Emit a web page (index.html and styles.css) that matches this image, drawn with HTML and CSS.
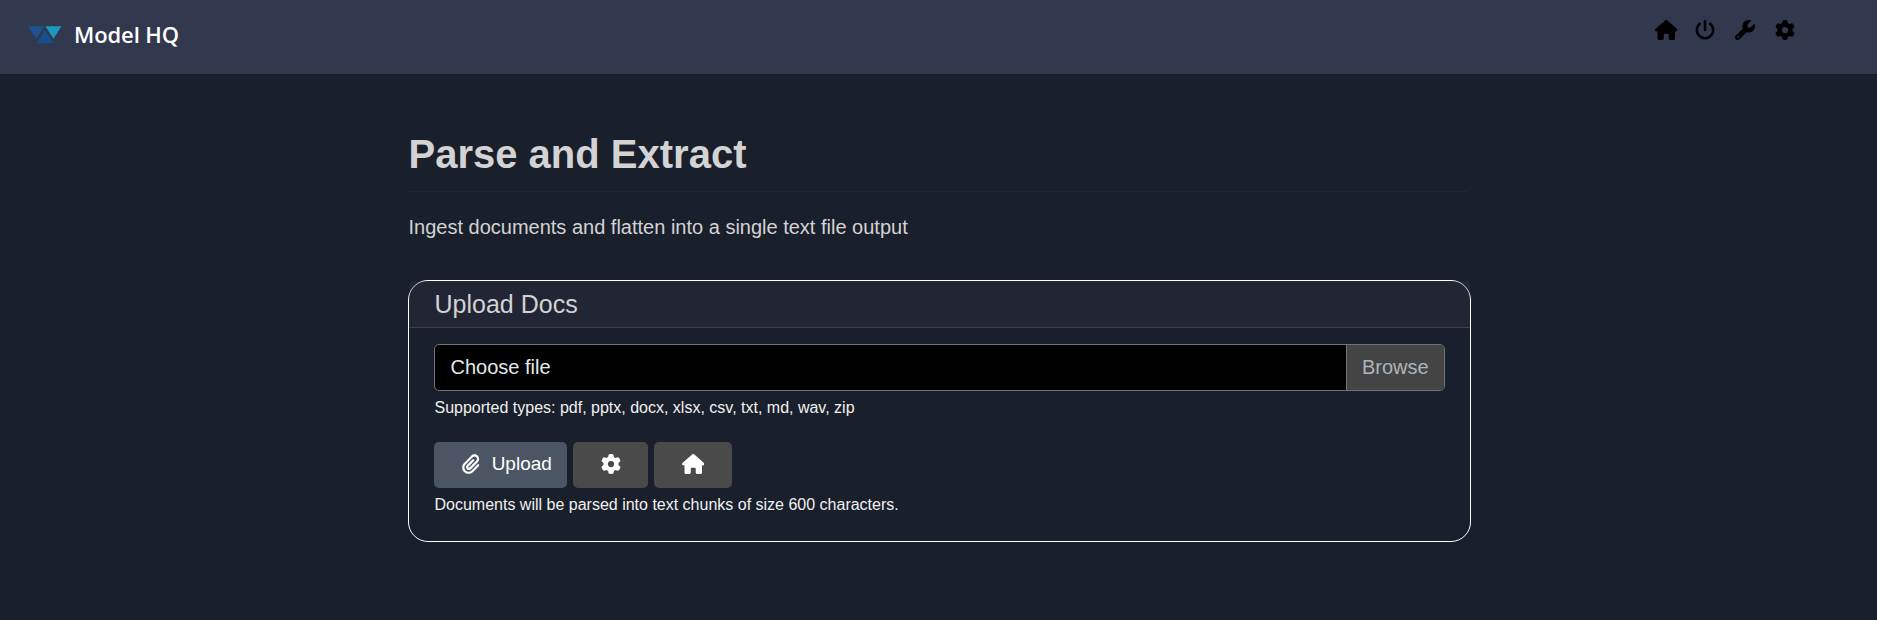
FILE: index.html
```html
<!DOCTYPE html>
<html lang="en">
<head>
<meta charset="utf-8">
<title>Model HQ</title>
<link rel="stylesheet" href="styles.css">
</head>
<body>
<svg class="sprite" aria-hidden="true">
  <symbol id="house" viewBox="0 0 576 512"><path d="M575.8 255.5c0 18-15 32.1-32 32.1h-32l.7 160.2c0 2.7-.2 5.4-.5 8.1V472c0 22.1-17.9 40-40 40H456c-1.1 0-2.2 0-3.3-.1c-1.4 .1-2.8 .1-4.2 .1H416 392c-22.1 0-40-17.9-40-40V448 384c0-17.7-14.3-32-32-32H256c-17.7 0-32 14.3-32 32v64 24c0 22.1-17.9 40-40 40H160 128.1c-1.5 0-3-.1-4.5-.2c-1.2 .1-2.4 .2-3.6 .2H104c-22.1 0-40-17.9-40-40V360c0-.9 0-1.9 .1-2.8V287.6H32c-18 0-32-14-32-32.1c0-9 3-17 10-24L266.4 8c7-7 15-8 22-8s15 2 21 7L564.8 231.5c8 7 12 15 11 24z"/></symbol>
  <symbol id="power" viewBox="0 0 512 512"><path d="M288 32c0-17.7-14.3-32-32-32s-32 14.3-32 32V256c0 17.7 14.3 32 32 32s32-14.3 32-32V32zM143.500 120.600c13.600-11.300 15.400-31.500 4.100-45.100s-31.500-15.400-45.100-4.100C49.700 115.400 16 181.800 16 256c0 132.500 107.500 240 240 240s240-107.500 240-240c0-74.200-33.800-140.600-86.600-184.600c-13.600-11.300-33.800-9.400-45.100 4.100s-9.400 33.800 4.100 45.100c38.900 32.300 63.500 81 63.500 135.400c0 97.200-78.800 176-176 176s-176-78.800-176-176c0-54.400 24.700-103.100 63.500-135.400z"/></symbol>
  <symbol id="wrench" viewBox="0 0 512 512"><path d="M352 320c88.400 0 160-71.600 160-160c0-15.300-2.200-30.100-6.200-44.200c-3.100-10.800-16.400-13.200-24.300-5.300l-76.800 76.800c-3 3-7.100 4.700-11.300 4.700H336c-8.800 0-16-7.200-16-16V118.600c0-4.200 1.700-8.300 4.700-11.300l76.800-76.800c7.900-7.900 5.400-21.200-5.300-24.300C382.100 2.200 367.300 0 352 0C263.600 0 192 71.600 192 160c0 19.100 3.400 37.500 9.500 54.500L19.900 396.100C7.200 408.800 0 426.100 0 444.100C0 481.600 30.400 512 67.900 512c18 0 35.300-7.200 48-19.900L297.500 310.500c17 6.200 35.400 9.500 54.500 9.500zM80 408a24 24 0 1 1 0 48 24 24 0 1 1 0-48z"/></symbol>
  <symbol id="gear" viewBox="0 0 512 512"><path d="M495.900 166.600c3.200 8.700 .5 18.400-6.400 24.600l-43.300 39.400c1.100 8.300 1.700 16.800 1.700 25.400s-.6 17.100-1.700 25.400l43.300 39.400c6.900 6.200 9.600 15.900 6.400 24.600c-4.400 11.900-9.700 23.300-15.800 34.300l-4.700 8.100c-6.600 11-14 21.400-22.100 31.200c-5.900 7.200-15.700 9.600-24.500 6.800l-55.700-17.700c-13.400 10.300-28.200 18.900-44 25.400l-12.500 57.100c-2 9.100-9 16.300-18.200 17.800c-13.800 2.300-28 3.500-42.500 3.500s-28.700-1.200-42.500-3.500c-9.200-1.500-16.200-8.700-18.200-17.800l-12.500-57.100c-15.800-6.500-30.600-15.100-44-25.400L83.100 425.900c-8.800 2.800-18.600 .3-24.500-6.800c-8.100-9.800-15.500-20.200-22.100-31.200l-4.700-8.100c-6.100-11-11.400-22.400-15.800-34.300c-3.200-8.700-.5-18.400 6.400-24.600l43.300-39.400C64.600 273.100 64 264.600 64 256s.6-17.100 1.700-25.400L22.400 191.200c-6.900-6.200-9.600-15.900-6.400-24.600c4.400-11.900 9.700-23.300 15.800-34.300l4.700-8.100c6.600-11 14-21.400 22.100-31.200c5.900-7.200 15.700-9.600 24.500-6.800l55.700 17.700c13.400-10.300 28.200-18.900 44-25.400l12.500-57.100c2-9.100 9-16.300 18.200-17.800C227.300 1.200 241.500 0 256 0s28.700 1.200 42.500 3.500c9.200 1.500 16.200 8.700 18.200 17.800l12.500 57.100c15.800 6.500 30.600 15.100 44 25.400l55.700-17.700c8.800-2.800 18.600-.3 24.500 6.800c8.100 9.800 15.500 20.200 22.100 31.200l4.700 8.100c6.100 11 11.400 22.400 15.800 34.300zM256 336a80 80 0 1 0 0-160 80 80 0 1 0 0 160z"/></symbol>
  <symbol id="paperclip" viewBox="0 0 448 512"><path d="M364.200 83.800c-24.400-24.400-64-24.400-88.400 0l-184 184c-42.100 42.100-42.100 110.300 0 152.400s110.300 42.100 152.400 0l152-152c10.900-10.900 28.700-10.900 39.600 0s10.900 28.700 0 39.600l-152 152c-64 64-167.600 64-231.600 0s-64-167.600 0-231.600l184-184c46.300-46.300 121.300-46.300 167.600 0s46.300 121.300 0 167.600l-176 176c-28.600 28.600-75 28.600-103.600 0s-28.600-75 0-103.600l144-144c10.900-10.900 28.700-10.900 39.600 0s10.900 28.700 0 39.600l-144 144c-6.700 6.700-6.700 17.700 0 24.400s17.700 6.700 24.400 0l176-176c24.400-24.400 24.400-64 0-88.400z"/></symbol>
</svg>
<header class="topbar">
  <a class="brand">
    <svg class="logo" viewBox="0 0 34 18">
      <path class="logo-left" d="M0 0.300H16.500L8.300 12.500Z"/>
      <path class="logo-mid" d="M16.800 4L25.500 17.300H8.500Z"/>
      <path class="logo-right" d="M17.300 0.300H33.500L25.500 12.800Z"/>
    </svg>
    <span class="brand-name">Model HQ</span>
  </a>
  <nav class="tools">
    <svg class="icon icon-wide"><use href="#house"/></svg>
    <svg class="icon"><use href="#power"/></svg>
    <svg class="icon"><use href="#wrench"/></svg>
    <svg class="icon"><use href="#gear"/></svg>
  </nav>
</header>
<main class="content">
  <h1 class="title">Parse and Extract</h1>
  <p class="lead">Ingest documents and flatten into a single text file output</p>
  <section class="card">
    <h2 class="card-header">Upload Docs</h2>
    <div class="card-body">
      <label class="file">
        <span class="file-name">Choose file</span>
        <span class="file-browse">Browse</span>
      </label>
      <p class="hint">Supported types: pdf, pptx, docx, xlsx, csv, txt, md, wav, zip</p>
      <div class="actions">
        <button class="btn btn-upload"><svg class="icon icon-narrow"><use href="#paperclip"/></svg>Upload</button>
        <button class="btn btn-gear"><svg class="icon"><use href="#gear"/></svg></button>
        <button class="btn btn-home"><svg class="icon icon-wide"><use href="#house"/></svg></button>
      </div>
      <p class="hint">Documents will be parsed into text chunks of size 600 characters.</p>
    </div>
  </section>
</main>
</body>
</html>
```
FILE: styles.css
```css
* { box-sizing: border-box; }
body {
  margin: 0;
  min-height: 620px;
  background: #1a1f2c;
  color: #d3d3d3;
  font: 20px/30px "Liberation Sans", Arial, sans-serif;
}
h1, h2, p { margin: 0; }
.sprite { display: none; }
.icon { display: block; flex: none; width: 20px; height: 20px; fill: currentColor; }
.icon-wide { width: 22.5px; }
.icon-narrow { width: 17.5px; }

.topbar {
  display: flex;
  justify-content: space-between;
  height: 74px;
  padding: 18px 82px 0 28px;
  background: #32384d;
}
.brand { display: flex; align-items: flex-start; }
.logo { width: 34px; height: 18px; margin-top: 8px; }
.logo-left { fill: #1c5391; }
.logo-mid { fill: #174e8d; }
.logo-right { fill: #1b98c0; }
.brand-name {
  margin-left: 12px;
  color: #fff;
  font: 600 22px/32px "Open Sans", "Noto Sans", sans-serif;
  letter-spacing: -0.1px;
}
.tools { display: flex; gap: 20px; padding-top: 1.5px; color: #000; }
.tools .icon-wide { margin-right: -2.5px; }

.content { width: 1063px; margin: 0 0 0 408px; padding-top: 50px; }
.title {
  height: 68px;
  margin-right: 4px;
  border-bottom: 1px solid #242634;
  padding-left: 0.5px;
  font-size: 40px;
  line-height: 60px;
}
.lead { margin-top: 20px; padding-left: 0.5px; }
.card {
  height: 262px;
  margin-top: 38px;
  border: 1px solid #fff;
  border-radius: 20px;
}
.card-header {
  height: 47px;
  padding-left: 25.5px;
  border-bottom: 1px solid #41404f;
  border-radius: 4px 4px 0 0;
  background: rgba(58, 55, 72, 0.25);
  font-size: 25px;
  font-weight: 400;
  line-height: 46px;
}
.card-body { padding: 16px 25px; }
.file {
  display: flex;
  height: 47px;
  border: 1px solid #6c757d;
  border-radius: 5px;
  background: #000;
  overflow: hidden;
  line-height: 45px;
}
.file-name { flex: 1; padding-left: 15.5px; color: #e0eaea; }
.file-browse {
  width: 98px;
  padding-left: 15px;
  border-left: 1px solid #6c757d;
  background: #444;
  color: #adb5bd;
}
.hint { margin-top: 5px; padding-left: 0.5px; color: #f0f0f0; font-size: 16px; line-height: 24px; }
.actions { display: flex; gap: 6px; margin-top: 22px; }
.btn {
  display: flex;
  align-items: center;
  justify-content: center;
  height: 46px;
  padding: 0 0 2px;
  border: 0;
  border-radius: 5px;
  background: #4a4a4a;
  color: #fff;
  font: 19px "Liberation Sans", Arial, sans-serif;
}
.btn-upload { width: 133px; gap: 12px; padding-left: 13px; background: #4b5563; }
.btn-gear { width: 75px; }
.btn-home { width: 78px; }
```
